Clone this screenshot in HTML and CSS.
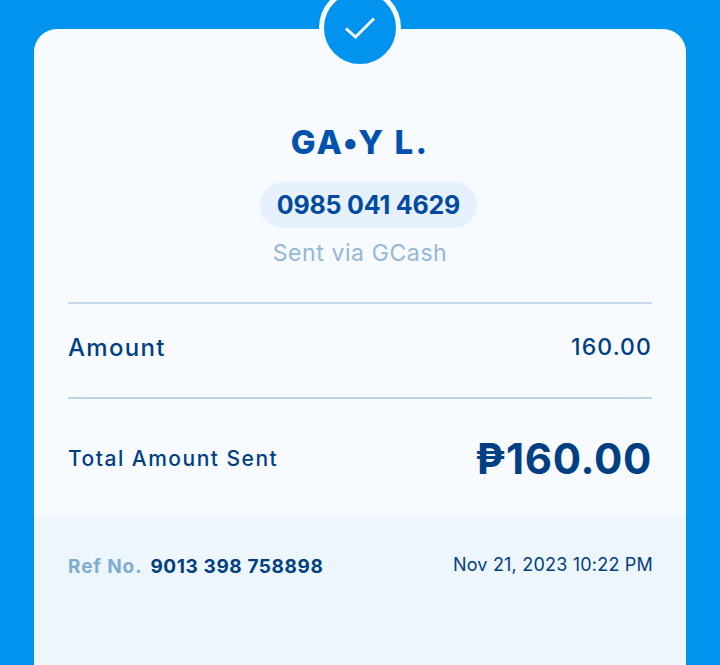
FILE: index.html
```html
<!DOCTYPE html>
<html lang="en">
<head>
    <meta charset="UTF-8">
    <meta name="viewport" content="width=device-width, initial-scale=1.0">
    <title>GCash Receipt</title>
    <link rel="stylesheet" href="styles.css">
</head>
<body>

<div class="card">
    <div class="badge">
        <svg class="check" width="32" height="24" viewBox="0 0 32 24">
            <path d="M2 12.5 L11.5 21 L30 2.5" fill="none" stroke="#f7faff" stroke-width="3"/>
        </svg>
    </div>

    <div class="recipient">
        <h2 class="name">GA•Y L.</h2>
        <div class="phone">0985 041 4629</div>
        <p class="via">Sent via GCash</p>
    </div>

    <div class="row amount">
        <span class="amount-label">Amount</span>
        <span class="value">160.00</span>
    </div>

    <div class="row total">
        <span class="total-label">Total Amount Sent</span>
        <span class="total-value">₱160.00</span>
    </div>

    <div class="footer">
        <div class="ref"><span class="ref-label">Ref No.</span><span class="ref-num">9013 398 758898</span></div>
        <div class="date">Nov 21, 2023 10:22 PM</div>
    </div>
</div>

</body>
</html>
```

FILE: styles.css
```css
html, body {
    height: 100%;
}
body {
    margin: 0;
    overflow: hidden;
    background: #0094ee;
    font-family: Inter, "Liberation Sans", sans-serif;
    color: #003f82;
}
.card {
    position: relative;
    height: 636px;
    margin: 29px 34px 0;
    border-radius: 23px 23px 0 0;
    background: #f7faff;
    display: flex;
    flex-direction: column;
}
.badge {
    position: absolute;
    top: -42px;
    left: 285px;
    width: 72px;
    height: 72px;
    border: 5px solid #f7faff;
    border-radius: 50%;
    background: #0094ee;
    display: flex;
    align-items: center;
    justify-content: center;
}
.recipient {
    height: 275px;
    margin: 0 34px;
    border-bottom: 2px solid #c7d9ea;
    box-sizing: border-box;
    padding-top: 94px;
    text-align: center;
}
.name {
    margin: 0;
    font-size: 33px;
    line-height: 38px;
    font-weight: 800;
    letter-spacing: 2.2px;
    color: #0052ac;
}
.phone {
    display: inline-block;
    width: 217px;
    height: 46px;
    margin: 21px 0 0 17px;
    border-radius: 23px;
    background: #e6f1fd;
    font-size: 25px;
    line-height: 46px;
    font-weight: 700;
    letter-spacing: -0.2px;
    color: #004a9f;
}
.via {
    margin: 10px 0 0;
    font-size: 23px;
    line-height: 30px;
    letter-spacing: 0.6px;
    color: #94b8d7;
}
.row {
    margin: 0 34px;
    display: flex;
    align-items: center;
    justify-content: space-between;
}
.amount {
    height: 95px;
    padding-bottom: 7px;
    border-bottom: 2px solid #bed2e4;
    box-sizing: border-box;
    font-size: 23px;
    font-weight: 500;
    letter-spacing: 1.1px;
}
.amount-label {
    font-size: 24px;
    letter-spacing: 1.3px;
}
.total {
    height: 118px;
}
.total-label {
    font-size: 21px;
    font-weight: 500;
    letter-spacing: 1.5px;
}
.total-value {
    font-size: 42px;
    font-weight: 700;
    letter-spacing: 0.7px;
}
.footer {
    flex: 1;
    padding: 38px 33px 0 34px;
    background: #edf5fd;
    display: flex;
    justify-content: space-between;
    align-items: flex-start;
}
.ref {
    font-size: 19px;
    line-height: 24px;
    font-weight: 700;
    letter-spacing: 0.6px;
}
.ref-label {
    color: #7fadd0;
    letter-spacing: 0.9px;
    margin-right: 8px;
}
.date {
    margin-top: -1px;
    font-size: 18px;
    line-height: 22px;
    letter-spacing: 0.2px;
}
```
